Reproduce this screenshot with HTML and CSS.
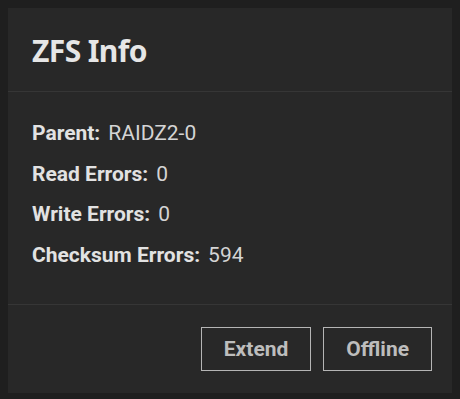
FILE: index.html
```html
<!DOCTYPE html>
<html lang="en">
<head>
    <meta charset="UTF-8">
    <meta name="viewport" content="width=device-width, initial-scale=1.0">
    <title>ZFS Info</title>
    <link rel="stylesheet" href="styles.css">
</head>
<body>
    <div class="card">
        <div class="card-header">
            <h2 class="card-title">ZFS Info</h2>
        </div>
        <div class="card-body">
            <div class="info-row"><span class="info-label">Parent:</span><span class="info-value">RAIDZ2-0</span></div>
            <div class="info-row"><span class="info-label">Read Errors:</span><span class="info-value">0</span></div>
            <div class="info-row"><span class="info-label">Write Errors:</span><span class="info-value">0</span></div>
            <div class="info-row"><span class="info-label">Checksum Errors:</span><span class="info-value">594</span></div>
        </div>
        <div class="card-actions">
            <button class="btn">Extend</button>
            <button class="btn">Offline</button>
        </div>
    </div>
</body>
</html>
```

FILE: styles.css
```css
body {
    margin: 8px;
    background-color: #1f1f1f;
    font-family: Roboto, "Liberation Sans", sans-serif;
}
.card {
    width: 446px;
    height: 385px;
    background-color: #282828;
    box-shadow: 0 1px 3px rgba(0, 0, 0, 0.4);
    display: flex;
    flex-direction: column;
}
.card-header {
    height: 84px;
    padding: 2px 24px 0;
    display: flex;
    align-items: center;
    border-bottom: 1px solid #363636;
    box-sizing: border-box;
}
.card-title {
    margin: 0;
    font-family: "Noto Sans", sans-serif;
    font-size: 30px;
    font-weight: 700;
    letter-spacing: -0.6px;
    color: #e6e6e6;
}
.card-body {
    flex: 1;
    padding: 21px 24px 0;
    border-bottom: 1px solid #363636;
}
.info-row {
    height: 40.5px;
    display: flex;
    align-items: center;
    font-size: 21px;
}
.info-label {
    font-weight: 700;
    color: #e2e2e2;
    margin-right: 8px;
}
.info-value {
    color: #d4d4d4;
}
.card-actions {
    height: 88px;
    padding: 0 22px;
    display: flex;
    justify-content: flex-end;
    align-items: center;
    gap: 12px;
    box-sizing: border-box;
}
.btn {
    height: 44px;
    padding: 0 22px;
    background: transparent;
    border: 1px solid #b5b5b5;
    color: #bdbdbd;
    font-family: Roboto, sans-serif;
    font-size: 21px;
    font-weight: 700;
    cursor: pointer;
}
```
